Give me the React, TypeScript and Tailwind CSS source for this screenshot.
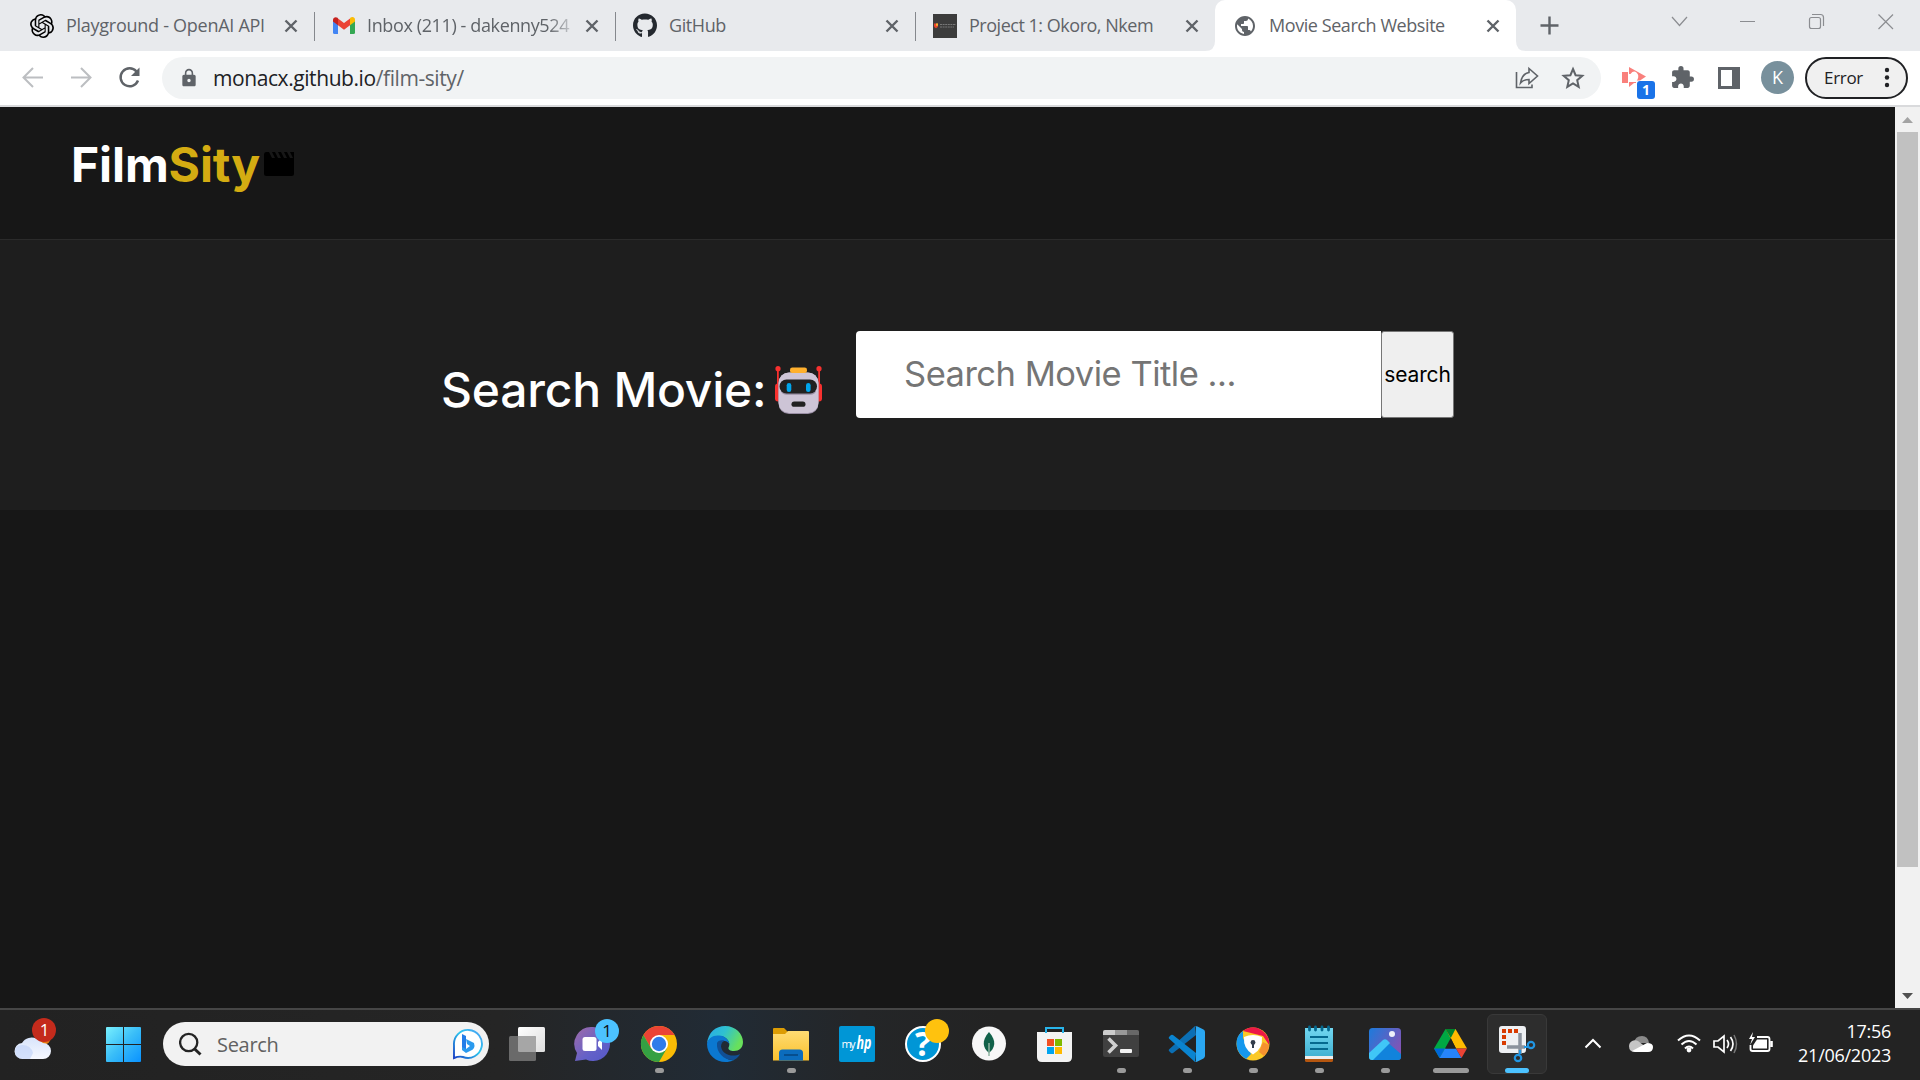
import React from "react";
import { SiOpenai } from "react-icons/si";
import { FaGithub } from "react-icons/fa";
import { MdExtension, MdPublic, MdLock } from "react-icons/md";

type Kids = { children?: React.ReactNode };

const UI = "font-['Open_Sans','Noto_Sans',sans-serif]";

function Cross({ className = "" }: { className?: string }) {
  return (
    <svg width="14" height="14" viewBox="0 0 14 14" className={`shrink-0 ${className}`} fill="none" stroke="#5f6368" strokeWidth="2.4">
      <path d="M1.500 1.500l11 11M12.500 1.500l-11 11" />
    </svg>
  );
}

function Gmail() {
  return (
    <svg width="22" height="17" viewBox="0 0 22 17">
      <path d="M0 3v12.500q0 1.500 1.500 1.500H5V6z" fill="#4285f4" />
      <path d="M22 3v12.500q0 1.500-1.500 1.500H17V6z" fill="#34a853" />
      <path d="M17 1.500v6.800l5-3.700V2.700C22 .2 19.200-.8 17.300.8z" fill="#fbbc04" />
      <path d="M5 8.300V1.500L11 6l6-4.500v6.800L11 12.800z" fill="#ea4335" />
      <path d="M0 2.700v1.900l5 3.700V1.500L4.600.8C2.800-.6 0 .3 0 2.700z" fill="#c5221f" />
    </svg>
  );
}

function CourseIcon() {
  return (
    <svg width="24" height="24" viewBox="0 0 24 24">
      <rect width="24" height="24" fill="#3c3c3c" />
      <path d="M1 9.500h4V12q0 1.500-2 2.300Q1 13.500 1 12z" fill="#e8452c" />
      <path d="M3 9.500h2v2.200H3z" fill="#f3b52c" />
      <path d="M7 10.500h16M7 13h14" stroke="#777" strokeDasharray="2 .6" />
    </svg>
  );
}

function Tab({ width, icon, title, gap, tracking, fade = false, pad }: { width: string; icon: React.ReactNode; title: string; gap: string; tracking: string; fade?: boolean; pad: string }) {
  return (
    <div className={`relative flex h-full items-center ${width} ${pad}`}>
      <div className="flex w-6 shrink-0 items-center justify-center">{icon}</div>
      <span className={`mb-px flex-1 whitespace-nowrap text-[18px] leading-6 text-[#5f6368] ${gap} ${tracking} ${fade ? "[mask-image:linear-gradient(to_right,#000_83%,transparent_97%)]" : ""}`}>{title}</span>
      <Cross />
    </div>
  );
}

function Divider() {
  return <div className="absolute right-0 top-[12px] h-[29px] w-[1.5px] bg-[#85888d]" />;
}

function TabStrip() {
  return (
    <div className="flex h-[51px] bg-[#e8eaed]">
      <div className="relative"><Tab width="w-[315px]" pad="pl-[30px] pr-[17px]" gap="ml-3" tracking="tracking-[-0.27px]" title="Playground - OpenAI API" icon={<SiOpenai size={24} color="#000" />} /><Divider /></div>
      <div className="relative"><Tab width="w-[301px]" pad="pl-[17px] pr-[17px]" gap="ml-[11px]" tracking="tracking-[-0.38px]" fade title="Inbox (211) - dakenny524" icon={<Gmail />} /><Divider /></div>
      <div className="relative"><Tab width="w-[300px]" pad="pl-[17px] pr-[17px]" gap="ml-3" tracking="tracking-[-0.4px]" title="GitHub" icon={<FaGithub size={25} color="#24292f" />} /><Divider /></div>
      <Tab width="w-[299px]" pad="pl-[17px] pr-[16px]" gap="ml-3" tracking="tracking-[-0.48px]" title="Project 1: Okoro, Nkem" icon={<CourseIcon />} />
      <div className="relative rounded-t-[10px] bg-white">
        <svg className="absolute -left-[10px] bottom-0" width="10" height="10"><path d="M10 0v10H0Q10 10 10 0z" fill="#fff" /></svg>
        <svg className="absolute -right-[10px] bottom-0" width="10" height="10"><path d="M0 0v10h10Q0 10 0 0z" fill="#fff" /></svg>
        <Tab width="w-[301px]" pad="pl-[18px] pr-[16px]" gap="ml-3" tracking="tracking-[-0.43px]" title="Movie Search Website" icon={<MdPublic size={26} color="#5f6368" />} />
      </div>
      <svg width="404" height="51" viewBox="1516 0 404 51" fill="none">
        <path d="M1540.500 25.500h18M1549.500 16.500v18" stroke="#5f6368" strokeWidth="2.400" />
        <g stroke="#8b8d91" strokeWidth="1.200">
          <path d="M1672 17l7.500 8.500L1687 17M1740 21.500h15" />
          <rect x="1809.500" y="17.500" width="11" height="11" rx="2" />
          <path d="M1812 14.500h8.500q3 0 3 3V26M1878.500 14.500l14.500 14.500M1893 14.500l-14.500 14.500" />
        </g>
      </svg>
    </div>
  );
}

function Toolbar() {
  return (
    <div className="flex h-[56px] items-center border-b-2 border-[#d9dadc] bg-white pb-px">
      <svg width="96" height="24" viewBox="0 67 96 24" className="shrink-0" fill="none" stroke="#bcbec1" strokeWidth="2">
        <path d="M43 78.500H24M33 69l-9.500 9.500L33 88M71 78.500h19M81 69l9.500 9.500L81 88" />
      </svg>
      <svg width="66" height="24" viewBox="96 67 66 24" className="shrink-0">
        <path d="M136.500 72.500a9 9 0 1 0 1.500 9" fill="none" stroke="#5f6368" strokeWidth="2.400" />
        <path d="M139.500 68.500v8.500H131z" fill="#5f6368" />
      </svg>
      <div className="flex h-[42px] w-[1439px] shrink-0 items-center rounded-full bg-[#f1f3f4] pl-[17px] pr-[15px]">
        <MdLock size={20} color="#5f6368" />
        <div className="ml-[14px] mt-px flex-1 whitespace-nowrap text-[21px] leading-6 tracking-[-0.42px] text-[#202124]">monacx.github.io<span className="text-[#5f6368]">/film-sity/</span></div>
        <svg width="24" height="24" viewBox="0 0 24 24" fill="none" stroke="#5f6368" strokeWidth="1.600">
          <path d="M1.500 6v15.500h15.500V18.500" />
          <path d="M14 2.500L22.500 10 14 17.500V13.500Q8.500 13.500 5.500 17 7 7.500 14 6.500z" />
        </svg>
        <svg width="24" height="24" viewBox="0 0 24 24" className="ml-[22px] mr-px" fill="none" stroke="#5f6368" strokeWidth="2">
          <path d="M12 3l2.600 6.200 6.700.6-5.100 4.400 1.500 6.600L12 17.300l-5.700 3.500 1.500-6.600-5.100-4.400 6.700-.6z" />
        </svg>
      </div>
      <div className="relative ml-[21px] h-6 w-6">
        <svg width="24" height="24" viewBox="0 0 24 24">
          <path d="M0 6h6v11H0z" fill="#f9807c" />
          <path d="M7 1l17 9.500-6 4H14V17H12l-5 4z" fill="#f9807c" />
          <path d="M7 8h1.500q3-4 6-1.500 3 2.500 1 7L14 16H7z" fill="#fff" />
        </svg>
        <div className="absolute left-[15px] top-[15px] flex h-[18px] w-[18px] items-center justify-center rounded-[3px] bg-[#1a73e8] text-[14px] font-bold text-white">1</div>
      </div>
      <MdExtension size={25} color="#5f6368" className="ml-[24px]" />
      <svg width="22" height="22" viewBox="0 0 22 22" className="ml-[23px]"><path fillRule="evenodd" d="M0 0h22v22H0zM3 3v16h11V3z" fill="#5f6368" /></svg>
      <div className="ml-[21px] flex h-[33px] w-[33px] items-center justify-center rounded-full bg-[#78909c] text-[18px] text-white">K</div>
      <div className="ml-[11px] flex h-[42px] w-[103px] items-center rounded-full border-2 border-[#202124] bg-[#f0f0f0] pl-[17px] text-[17px] tracking-[-0.3px] text-[#202124]">
        <span className="w-[57px]">Error</span>
        <svg width="12" height="22" fill="#202124"><circle cx="6" cy="3" r="2.200" /><circle cx="6" cy="10.500" r="2.200" /><circle cx="6" cy="18" r="2.200" /></svg>
      </div>
    </div>
  );
}

function Clapper() {
  return (
    <svg width="30" height="25" viewBox="0 0 30 25">
      <path d="M2 0h3l3 6h3L8 0h3l3 6h3l-3-6h3l3 6h3l-3-6h3l3 6h3l-3-6h4v21.500q0 2.500-2.500 2.500h-25Q0 24 0 21.500V2.500Q0 0 2 0z" fill="#000" />
    </svg>
  );
}

function Robot() {
  return (
    <svg width="47" height="48" viewBox="0 0 47 48">
      <g fill="#f8312f">
        <circle cx="3" cy="2.700" r="2.600" /><circle cx="44" cy="2.700" r="2.600" />
        <rect x="2" y="3" width="1.800" height="18" /><rect x="43.200" y="3" width="1.800" height="18" />
        <rect x="0" y="17.500" width="8" height="18" rx="3" /><rect x="39" y="17.500" width="8" height="18" rx="3" />
      </g>
      <rect x="3.500" y="6.500" width="40" height="41.500" rx="10.500" fill="#998ea4" />
      <rect x="3.500" y="6.500" width="40" height="40.500" rx="10.500" fill="#cdc4d6" />
      <rect x="15" y="1.500" width="17" height="5.500" rx="2.300" fill="#ffb02e" />
      <path d="M6 25q1 3.800 6 3.800h23q5 0 6-3.800z" fill="#998ea4" />
      <rect x="4.500" y="13.500" width="37.500" height="14" rx="7" fill="#212121" />
      <rect x="11.700" y="17" width="4.600" height="9" rx="2.300" fill="#00a6ed" /><rect x="31" y="17" width="4.600" height="9" rx="2.300" fill="#00a6ed" />
      <rect x="16.500" y="35.500" width="14" height="5.300" rx="2.650" fill="#212121" />
    </svg>
  );
}

function Page() {
  return (
    <div className="flex h-[901px] font-['Inter',sans-serif]">
      <main className="w-[1895px] bg-[#171717]">
        <header className="flex h-[133px] border-b border-[#2b2b2b] pl-[71px] pt-[29px]">
          <h1 className="flex h-[58px] w-[190px] text-[48px] font-bold leading-[58px] tracking-[-0.1px] text-white"><span>Film</span><span className="text-[#d4ac12]">Sity</span></h1>
          <div className="ml-[3px] mt-4"><Clapper /></div>
        </header>
        <section className="flex h-[270px] bg-[#1e1e1e] pl-[441px] pt-[91px]">
          <label className="mt-[30px] flex h-[58px] w-[334px] whitespace-nowrap text-[48px] font-medium leading-[58px] tracking-[-0.22px] text-white">Search Movie:</label>
          <div className="mt-[35px]"><Robot /></div>
          <div className="ml-[34px] flex h-[87px] w-[525px] items-center rounded-l bg-white pb-px pl-[48px] text-[34.500px] tracking-[-0.5px] text-[#757575]">Search Movie Title ...</div>
          <button className="flex h-[87px] w-[73px] items-center justify-center rounded-[3px] border border-[#767676] bg-[#efefef] text-[21px] tracking-[-0.1px] text-black">search</button>
        </section>
      </main>
      <aside className="flex w-[25px] flex-col items-center bg-[#f1f1f1]">
        <svg width="25" height="25"><path d="M7 16l5.500-6 5.500 6z" fill="#a3a3a3" /></svg>
        <div className="h-[735px] w-[21px] bg-[#c1c1c1]" />
        <svg width="25" height="25" className="mt-auto"><path d="M7 10l5.500 6 5.500-6z" fill="#505050" /></svg>
      </aside>
    </div>
  );
}

function Slot({ children, dot = "" }: Kids & { dot?: string }) {
  return (
    <div className="relative flex h-[68px] w-[66px] shrink-0 items-center justify-center">
      {children}
      {dot && <div className={`absolute bottom-[5px] h-[5px] rounded-full ${dot}`} />}
    </div>
  );
}

const DOT = "w-[9px] bg-[#9a9a9a]";

function Icon({ children }: Kids) {
  return <svg width="36" height="36" viewBox="0 0 36 36" className="overflow-visible">{children}</svg>;
}

function TaskIcons() {
  return (
    <div className="ml-[5px] flex">
      <Slot><Icon>
        <rect x="9" y="1" width="27" height="25" rx="1.500" fill="url(#tv)" />
        <rect x="0" y="10" width="27" height="25" rx="1.500" fill="#6a6a6a" />
        <path d="M9 10h16.500q1.500 0 1.500 1.500V26H10.500Q9 26 9 24.500z" fill="#a6a6a6" />
      </Icon></Slot>
      <Slot><Icon>
        <path d="M18 1a17 17 0 1 1-7 32.500L0 35l2-8A17 17 0 0 1 18 1z" fill="url(#chat)" />
        <rect x="7.500" y="11" width="14" height="14" rx="2.500" fill="#fff" /><path d="M23 16l4-4v12l-4-4z" fill="#fff" />
        <circle cx="32" cy="5" r="12" fill="#4cc2ff" /><text x="32" y="11" textAnchor="middle" fontSize="17" fill="#111">1</text>
      </Icon></Slot>
      <Slot dot={DOT}><Icon>
        <circle cx="18" cy="18" r="18" fill="#fbbc05" />
        <path d="M18 9h15.600A18 18 0 0 0 2.400 9l7.800 13.500z" fill="#ea4335" />
        <path d="M2.400 9A18 18 0 0 0 18 36l7.800-13.500H10.200z" fill="#34a043" />
        <circle cx="18" cy="18" r="9" fill="#fff" /><circle cx="18" cy="18" r="7.200" fill="#2f7bea" />
      </Icon></Slot>
      <Slot><Icon>
        <path d="M0 18C1 6 9 0 18 0c11 0 18 8 18 16 0 6-4 9-9 9-4 0-6-1.500-5.500-3.500C24 18 21 10 12 10 5 10 1 14 0 18z" fill="url(#edgeTop)" />
        <path d="M0 18C1 12 6 9 12 9.500c6 .2 10 4.500 10.500 9-2-5-9-5-9 2C13.500 30 21 35 27 34 15 40 0 32 0 18z" fill="#0b78d1" />
        <path d="M10 17c-1 10 8 18 17 17 3-1.500 5-3.800 6-6-7 3.500-18 1-19-7.500.2-3 1.500-5 3.500-6-4-.8-7 .5-7.500 2.500z" fill="#114f94" />
      </Icon></Slot>
      <Slot dot={DOT}><Icon>
        <path d="M0 3q0-1 1-1h10l4 4v6H0z" fill="#dc9c04" />
        <path d="M0 8h12l3-3h20q1 0 1 1v28.500H0z" fill="url(#folder)" />
        <path d="M6 34.500V27q0-3.500 3.500-3.500h17q3.500 0 3.500 3.500v7.500z" fill="#0b6cbd" /><path d="M11 29h14" stroke="#064b8a" strokeWidth="1.800" />
      </Icon></Slot>
      <Slot><Icon>
        <rect width="36" height="36" rx="2" fill="#0096d6" />
        <text x="2.500" y="22" fontSize="11" fill="#fff" textLength="14">my</text>
        <text x="17.500" y="23" fontSize="17" fontWeight="700" fontStyle="italic" fill="#fff" textLength="15" lengthAdjust="spacingAndGlyphs">hp</text>
      </Icon></Slot>
      <Slot><Icon>
        <circle cx="18" cy="18" r="17" fill="#0096d6" stroke="#fff" strokeWidth="2" />
        <text x="18" y="30" textAnchor="middle" fontSize="34" fontWeight="700" fill="#fff">?</text>
        <circle cx="32" cy="5" r="12" fill="#ffc20e" />
      </Icon></Slot>
      <Slot><Icon>
        <circle cx="18" cy="17.500" r="17" fill="#f7f7f7" />
        <path d="M18 6c8 9 6 16 0 21-6-5-8-12 0-21z" fill="#116149" /><path d="M18 17v13" stroke="#8fb5a2" strokeWidth="1.500" />
      </Icon></Slot>
      <Slot><Icon>
        <path d="M0 6h35v25q0 5-5 5H5q-5 0-5-5z" fill="#f3f3f3" /><path d="M9 7V2h17v5" fill="none" stroke="#28b4ea" strokeWidth="2" />
        <path d="M10 13h7v7h-7z" fill="#f25022" /><path d="M18 13h7v7h-7z" fill="#7fba00" /><path d="M10 21h7v7h-7z" fill="#00a4ef" /><path d="M18 21h7v7h-7z" fill="#ffb900" />
      </Icon></Slot>
      <Slot dot={DOT}><Icon>
        <rect y="4" width="36" height="27" rx="2" fill="#404040" /><path d="M0 9V6q0-2 2-2h10v5z" fill="#ccc" /><path d="M12 4h12v5H12z" fill="#999" /><path d="M24 4h10q2 0 2 2v3H24z" fill="#686868" />
        <path d="M5.500 12.500l7 7-7 7" fill="none" stroke="#d0d0d0" strokeWidth="3.600" /><rect x="17" y="23" width="12" height="4" rx="1" fill="#f2f2f2" />
      </Icon></Slot>
      <Slot dot={DOT}><Icon>
        <path d="M26 0l1 9L4 27q-1 .6-2 0l-2-2q-.7-1 .2-1.800z" fill="#0b6fb4" />
        <path d="M26 36l1-9L4 9q-1-.6-2 0l-2 2q-.7 1 .2 1.800z" fill="#0a84d0" />
        <path d="M26 0q1.500 0 2.500.6l6 3Q36 4.500 36 6v24q0 1.500-1.500 2.400l-6 3Q27 36 26 36q1 0 1-2V2q0-2-1-2z" fill="#2aa7f2" />
      </Icon></Slot>
      <Slot dot={DOT}><Icon>
        <circle cx="18" cy="18" r="16.500" fill="#fbc926" />
        <path d="M8 5Q18-2 27 4.500 35 10 34 19L28 10z" fill="#ed1846" />
        <path d="M8 5Q1 10 1.500 18 2 28 11 33l5-5L8 12z" fill="#1598ed" />
        <path d="M34 19q0 6-5 11l-5-4 4-10z" fill="#f5912f" />
        <path d="M9 11q9-4 18 0 1 12-9 17.500Q8 23 9 11z" fill="#fff" />
        <circle cx="18" cy="16.500" r="2.400" fill="#333d4b" /><path d="M17 17h2v5h-2z" fill="#333d4b" />
      </Icon></Slot>
      <Slot dot={DOT}><Icon>
        <path d="M4 2h28v28H4z" fill="url(#note)" /><path d="M4 30h28v3H4z" fill="#eee" /><path d="M4 33h28v1.500q0 1.500-1.500 1.500h-25Q4 36 4 34.500z" fill="#b5560f" />
        <path d="M9 11h18M9 17h18M9 23h18" stroke="#05698f" strokeWidth="2" /><path d="M8.500 1v3M14.500 1v3M21 1v3M27.500 1v3" stroke="#05698f" strokeWidth="2.800" strokeLinecap="round" />
      </Icon></Slot>
      <Slot dot={DOT}><Icon>
        <rect x="2" y="2" width="32" height="32" rx="3.500" fill="url(#photo)" /><path d="M3 32L20 16l14 12v3q0 3-3 3H6q-2 0-3-2z" fill="#1183dc" />
        <path d="M2 27l14-13q2-1.500 4 0l3 3L6 34H5q-3 0-3-3z" fill="#40c6f7" /><circle cx="25" cy="8" r="3" fill="#eef0fa" />
      </Icon></Slot>
      <Slot dot="w-[36px] bg-[#9a9a9a]"><Icon>
        <g transform="translate(1 3)">
          <path d="M11.500 0l6 10L5.500 29 0 19.500z" fill="#00a843" />
          <path d="M21.500 0H11.700L22 19.500h11z" fill="#ffba00" /><path d="M11.500 0h10L16.800 9z" fill="#00832d" />
          <path d="M0 19.500h11L5.500 29z" fill="#0066da" /><path d="M11 19.500h11L27.500 29h-22z" fill="#2684fc" /><path d="M22 19.500h11L27.500 29z" fill="#ea4335" />
          <path d="M16.800 9L11 19.500h11z" fill="#222" />
        </g>
      </Icon></Slot>
      <Slot dot="w-[24px] bg-[#4cc2ff]">
        <div className="flex h-[60px] w-[60px] items-center justify-center rounded-md border border-[#393939] bg-[#2d2d2d]"><Icon>
          <rect x="0" width="27" height="27" rx="3" fill="#eef0f3" />
          <path d="M3 3h4v4H3zM9 3h4v4H9zM15 3h4v4h-4zM3 9h4v4H3zM3 15h4v4H3z" fill="#d83b01" />
          <path d="M21 7v21M8 21h18" stroke="#8b929d" strokeWidth="3.500" />
          <g fill="none" stroke="#2196e3" strokeWidth="2.200"><circle cx="32" cy="19" r="3.200" /><circle cx="19" cy="32" r="3.200" /><path d="M21 28v-4M25 21h4" /></g>
        </Icon></div>
      </Slot>
    </div>
  );
}

function Gradients() {
  return (
    <svg width="0" height="0" className="absolute">
      <defs>
        <linearGradient id="tv" x2="1" y2="1"><stop stopColor="#fff" /><stop offset="1" stopColor="#ddd" /></linearGradient>
        <linearGradient id="chat" x2="1" y2="1"><stop stopColor="#a06ba8" /><stop offset=".6" stopColor="#6461c8" /><stop offset="1" stopColor="#5558c8" /></linearGradient>
        <linearGradient id="edgeTop" x2="1" y2=".4"><stop stopColor="#28a8ea" /><stop offset=".5" stopColor="#2fc1d0" /><stop offset="1" stopColor="#68e05c" /></linearGradient>
        <linearGradient id="folder" x2="0" y2="1"><stop stopColor="#ffdc73" /><stop offset="1" stopColor="#fac12d" /></linearGradient>
        <linearGradient id="note" x2="0" y2="1"><stop stopColor="#72d7f0" /><stop offset="1" stopColor="#42b2d3" /></linearGradient>
        <linearGradient id="photo" x2="1" y2=".6"><stop stopColor="#1c7bdc" /><stop offset="1" stopColor="#8254b5" /></linearGradient>
        <linearGradient id="win" x2="1" y2="1"><stop stopColor="#79f0fd" /><stop offset=".5" stopColor="#39bdf8" /><stop offset="1" stopColor="#0992ff" /></linearGradient>
        <linearGradient id="cloud" x2="0" y2="1"><stop stopColor="#d8e4fb" /><stop offset="1" stopColor="#f6f8ff" /></linearGradient>
        <linearGradient id="bing" x1="1" x2="0" y2="1"><stop stopColor="#4b9df5" /><stop offset=".45" stopColor="#2cc7ee" /><stop offset="1" stopColor="#1a3fc4" /></linearGradient>
      </defs>
    </svg>
  );
}

function Taskbar() {
  return (
    <footer className="flex h-[72px] border-t-2 border-[#464646] bg-[#232323] bg-[linear-gradient(90deg,#222_0,#252525_500px,#212b35_720px,#242628_860px,#232323_1000px)]">
      <svg width="163" height="70" viewBox="0 1010 163 70" className="shrink-0">
        <circle cx="43" cy="1037" r="8" fill="#e57a12" />
        <path d="M23 1059a8 8 0 0 1-1-16 11 11 0 0 1 15-4l6 4a8 8 0 0 1 0 16z" fill="url(#cloud)" />
        <path d="M15 1051q0-6 7-6 9 0 11 8l-3 6h-7q-8 0-8-8z" fill="#b9cdf8" fillOpacity=".55" />
        <circle cx="44" cy="1030" r="12" fill="#c42b1c" />
        <text x="44.500" y="1036" textAnchor="middle" fontSize="17" fill="#fff">1</text>
        <path d="M106 1028q0-1 1-1h16v17h-17zM124 1027h16q1 0 1 1v16h-17zM106 1045h17v17h-16q-1 0-1-1zM124 1045h17v16q0 1-1 1h-16z" fill="url(#win)" />
      </svg>
      <div className="mt-[12px] flex h-[44px] w-[326px] shrink-0 items-center rounded-full bg-[#f2f2f2] pl-4 pr-[6px]">
        <svg width="23" height="24" viewBox="0 0 23 24" fill="none" stroke="#242424" strokeWidth="2.300"><circle cx="9.700" cy="10.500" r="8.600" /><path d="M15.700 17l5.800 5.500" strokeWidth="3" /></svg>
        <span className="ml-[15px] mt-px flex-1 text-[20px] tracking-[-0.3px] text-[#616161]">Search</span>
        <svg width="31" height="32" viewBox="0 0 31 32">
          <path d="M2 30V17A14 14 0 1 1 11 29q-4-1-9 1z" fill="#fff" stroke="url(#bing)" strokeWidth="1.900" />
          <path d="M10 6l4 2v14l-4-2z" fill="#237de8" /><path d="M14 11l8 4q2 6-4 8l-4 2-4-3v-3l4 2 4-3-3-2z" fill="#2b9aee" />
        </svg>
      </div>
      <TaskIcons />
      <svg width="230" height="70" viewBox="1550 1010 230 70" className="shrink-0" fill="none" stroke="#fff" strokeWidth="2">
        <path d="M1585.500 1047.500l7.500-7.500 7.500 7.500" />
        <g stroke="none"><path d="M1634 1043q1-7 8-7 6 0 7 7z" fill="#8a8a8a" /><path d="M1629 1046a6 6 0 0 1 9-5l9 7-12 4q-6 0-6-6z" fill="#c5c5c5" /><path d="M1632 1051l15-8q6 0 6 4 0 5-5 5h-13z" fill="#fff" /></g>
        <path d="M1678 1040.500q11-10 22 0M1681.500 1044.500q7.500-7 15 0M1685 1048.500q4-4 8 0" /><circle cx="1689" cy="1050" r="1.400" fill="#fff" />
        <path d="M1714 1041h4l6-5v16l-6-5h-4zM1727 1040q3 4 0 8M1730.500 1037q5 7 0 14" strokeWidth="1.700" /><path d="M1734 1035q5 9 0 18" stroke="#777" strokeWidth="1.500" />
        <path d="M1757 1037h10.500q2 0 2 2v10q0 2-2 2h-15q-2 0-2-2v-4" strokeWidth="1.800" /><path d="M1757 1039.500h10v9h-14v-3z" fill="#fff" stroke="none" /><path d="M1771.500 1041v6" strokeWidth="2.600" /><path d="M1753 1032l-4 7h3l-2 6 5-8h-3z" fill="#fff" stroke="none" />
      </svg>
      <div className="ml-auto mr-[29px] mt-[9px] whitespace-nowrap text-right text-[18px] leading-6 tracking-[-0.26px] text-white"><div>17:56</div><div>21/06/2023</div></div>
    </footer>
  );
}

export default function App() {
  return (
    <div className={`h-[1080px] w-[1920px] overflow-hidden ${UI}`}>
      <Gradients />
      <TabStrip />
      <Toolbar />
      <Page />
      <Taskbar />
    </div>
  );
}
